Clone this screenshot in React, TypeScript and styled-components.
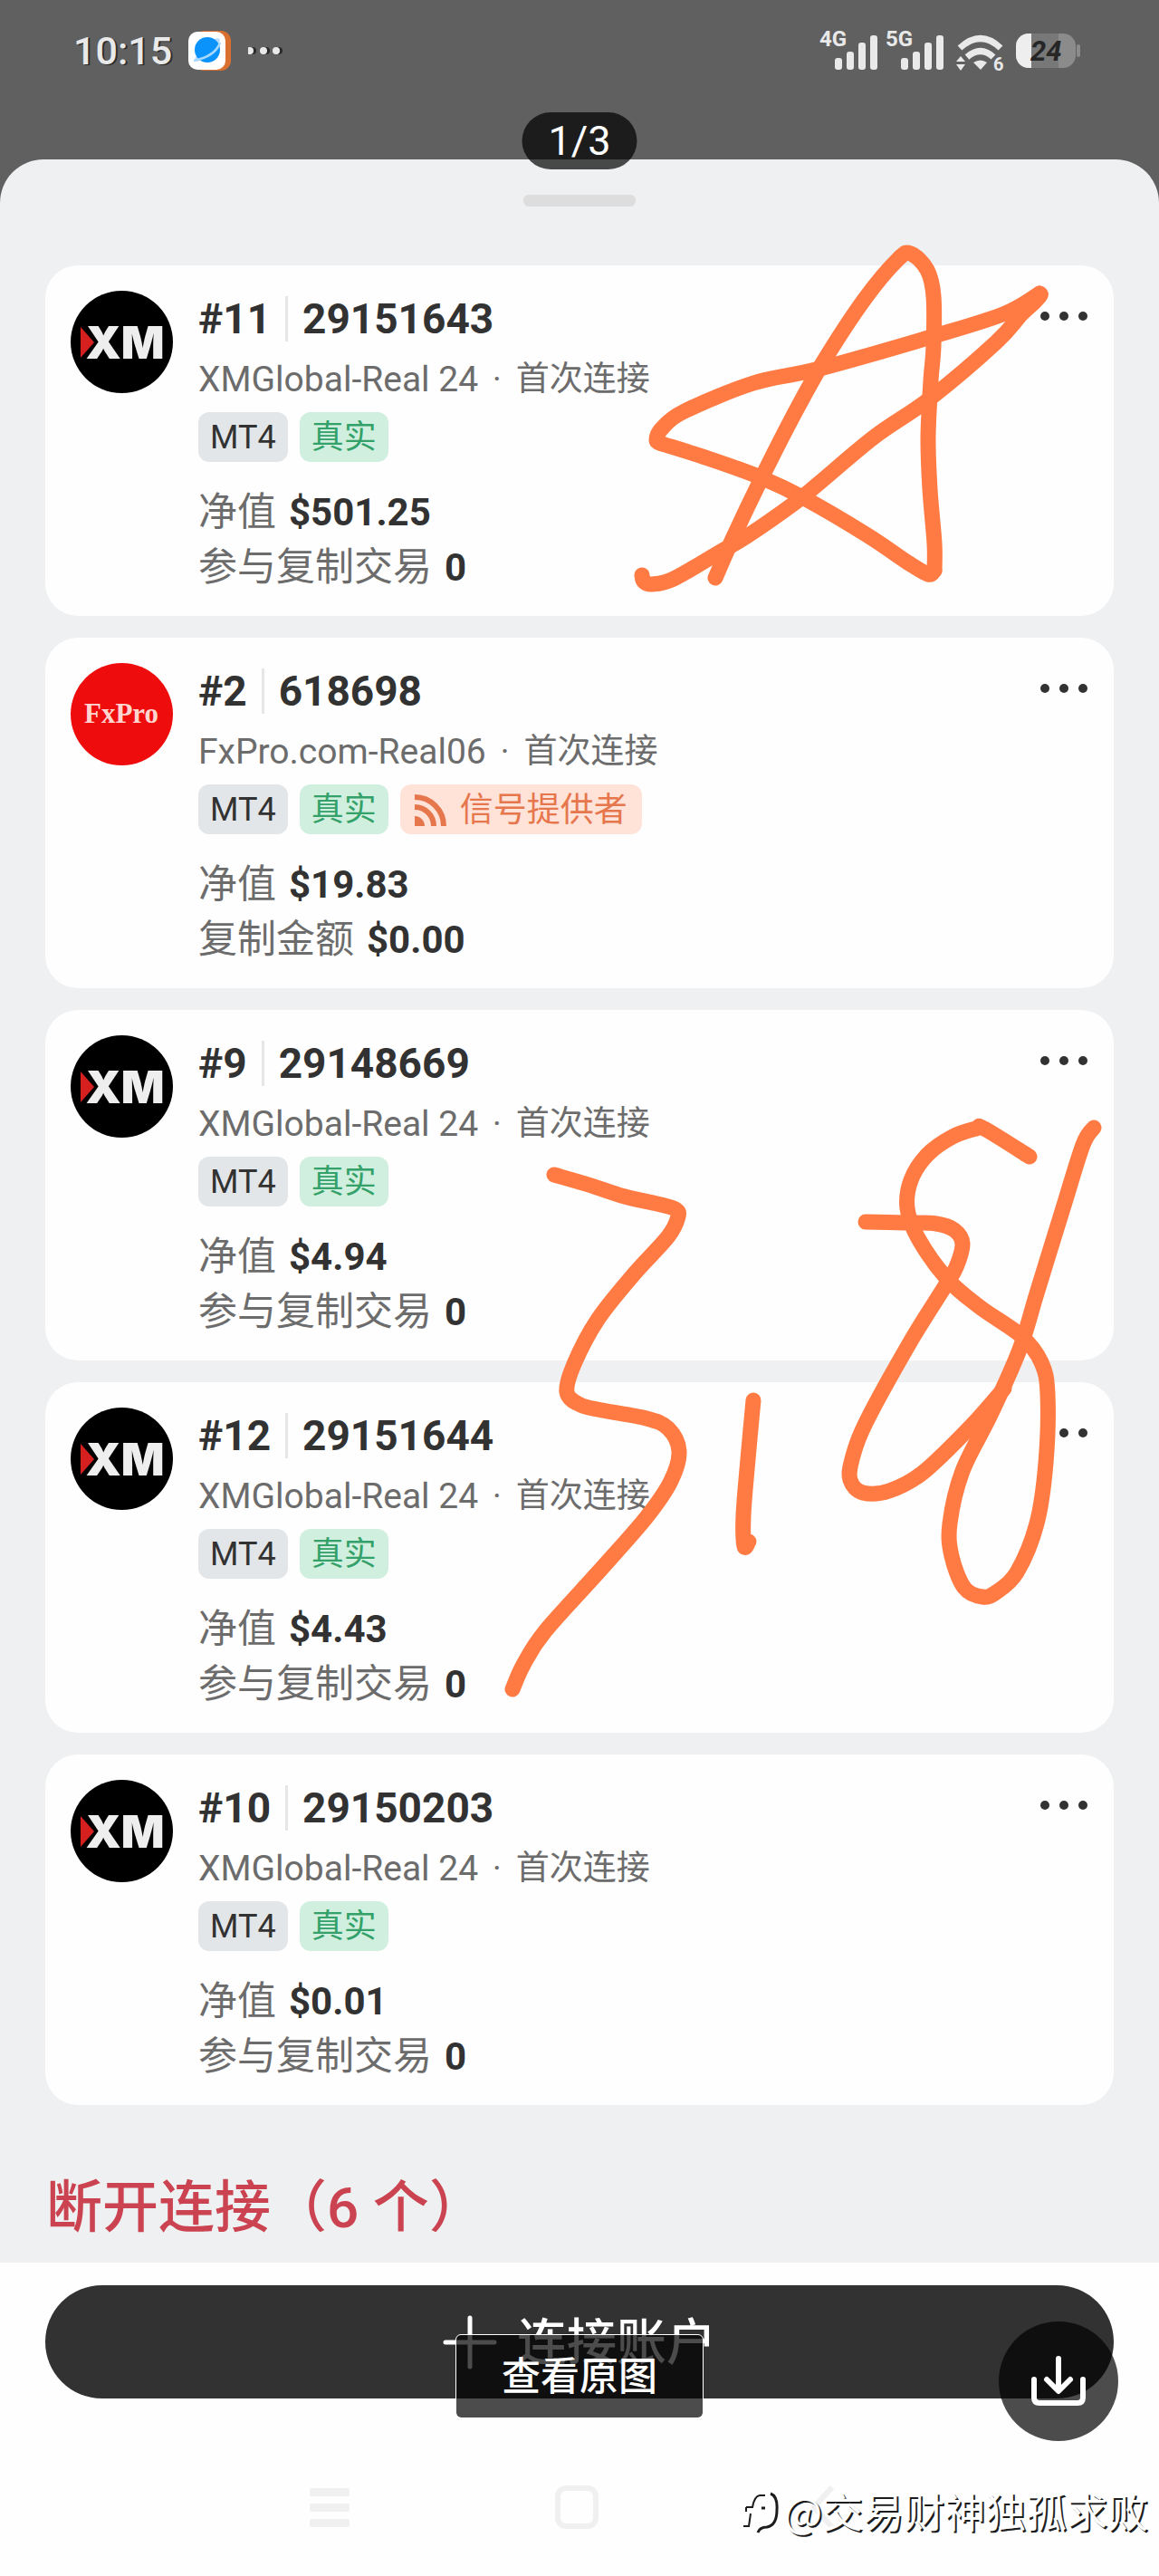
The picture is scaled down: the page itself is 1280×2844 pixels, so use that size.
import React from "react";
import styled, { createGlobalStyle } from "styled-components";

const GlobalStyle = createGlobalStyle`
  * { box-sizing: border-box; }
  body {
    margin: 0;
    background: #fefefe;
    color: #323232;
    font-family: Roboto, "Noto Sans CJK SC", sans-serif;
  }
  button {
    border: 0;
    padding: 0;
    background: none;
    color: inherit;
    font: inherit;
    cursor: pointer;
  }
  svg { display: block; }
`;

const Page = styled.div`
  position: relative;
  min-height: 100vh;
  display: flex;
  flex-direction: column;
  overflow: hidden;
  background: #606060;
`;

const StatusBar = styled.header`
  height: 176px;
  padding: 28px 87px 0 81px;
  display: flex;
  justify-content: space-between;
  align-items: flex-start;
  color: #e9e9e9;
`;

const StatusGroup = styled.div<{ $gap: number }>`
  height: 56px;
  display: flex;
  align-items: center;
  gap: ${(p) => p.$gap}px;
`;

const Clock = styled.time`
  width: 109px;
  font-size: 43px;
  line-height: 56px;
  font-weight: 500;
  white-space: nowrap;
  text-shadow: 2px 1px 0 #2b2b2b;
`;

const Sheet = styled.main`
  flex: 1;
  padding: 39px 50px 18px;
  display: flex;
  flex-direction: column;
  border-radius: 48px 48px 0 0;
  background: #eff0f2;
`;

const Handle = styled.div`
  width: 124px;
  height: 13px;
  margin: 0 auto 65px;
  border-radius: 6px;
  background: #dcdddc;
`;

const AccountList = styled.ul`
  margin: 0;
  padding: 0;
  list-style: none;
  display: flex;
  flex-direction: column;
  gap: 24px;
`;

const Card = styled.li`
  padding: 28px 29px 23px 28px;
  display: flex;
  align-items: flex-start;
  gap: 28px;
  border-radius: 36px;
  background: #fefefe;
`;

const Details = styled.div`
  flex: 1;
  min-width: 0;
`;

const Title = styled.h2`
  margin: 0;
  display: flex;
  align-items: center;
  gap: 16px;
  font-size: 46px;
  line-height: 62px;
  font-weight: 700;
`;

const Divider = styled.span`
  width: 3px;
  height: 50px;
  background: #e6e6e6;
`;

const Server = styled.p`
  margin: 11px 0;
  display: flex;
  gap: 16px;
  font-size: 37px;
  line-height: 50px;
  color: #6c6c6c;
`;

const ServerName = styled.span`
  font-size: 39px;
`;

const Chips = styled.div`
  margin-bottom: 25px;
  display: flex;
  gap: 13px;
`;

const tones = {
  gray: ["#e3e6e9", "#323232"],
  green: ["#d0efdf", "#33a169"],
  orange: ["#ffe2d8", "#e6774c"],
};

const Chip = styled.span<{ $tone: keyof typeof tones }>`
  height: 55px;
  padding: 2px ${(p) => (p.$tone === "orange" ? 16 : 13)}px 0;
  display: flex;
  align-items: center;
  gap: 15px;
  border-radius: 12px;
  font-size: ${(p) => (p.$tone === "orange" ? 37 : 36)}px;
  line-height: 53px;
  background: ${(p) => tones[p.$tone][0]};
  color: ${(p) => tones[p.$tone][1]};
`;

const Amounts = styled.dl`
  margin: 0;
`;

const Amount = styled.div`
  display: flex;
  gap: 14px;
  font-size: 43px;
  line-height: 61px;
`;

const AmountName = styled.dt`
  color: #6c6c6c;
`;

const AmountValue = styled.dd`
  margin: 0;
  font-size: 42px;
  font-weight: 700;
`;

const MoreButton = styled.button`
  height: 56px;
  display: flex;
  align-items: center;
`;

const Disconnected = styled.h2`
  margin: 74px 0 0;
  padding-left: 1px;
  font-size: 62px;
  line-height: 80px;
  font-weight: 500;
  color: #cb4350;
`;

const Footer = styled.footer`
  padding: 25px 50px 52px;
  background: #fefefe;
`;

const ConnectButton = styled.button`
  width: 100%;
  height: 125px;
  display: flex;
  align-items: center;
  justify-content: center;
  gap: 22px;
  border-radius: 63px;
  background: #323232;
  color: #fff;
  font-size: 55px;
  line-height: 72px;
  font-weight: 500;
`;

const SystemNav = styled.nav`
  height: 48px;
  margin-top: 96px;
  padding-right: 7px;
  display: grid;
  grid-template-columns: 1fr 48px 1fr;
  align-items: center;
`;

const NavButton = styled.button<{ $side?: "left" | "right" }>`
  width: 48px;
  height: 48px;
  ${(p) => p.$side === "left" && "justify-self: end; margin-right: 224px;"}
  ${(p) => p.$side === "right" && "justify-self: start; margin-left: 226px;"}
`;

const PageCounter = styled.div`
  position: absolute;
  top: 124px;
  left: 50%;
  width: 127px;
  transform: translateX(-50%);
  border-radius: 32px;
  background: rgba(0, 0, 0, 0.7);
  color: #fff;
  font-size: 45px;
  line-height: 63px;
  text-align: center;
`;

const OriginalButton = styled.button`
  && {
    position: absolute;
    bottom: 174px;
    left: 50%;
    width: 274px;
    height: 93px;
    transform: translateX(-50%);
    border: 1px solid #fff;
    border-radius: 6px;
    background: rgba(0, 0, 0, 0.7);
    background-clip: padding-box;
    color: #fff;
    font-size: 43px;
    line-height: 60px;
    font-weight: 500;
  }
`;

const DownloadButton = styled.button`
  && {
    position: absolute;
    right: 45px;
    bottom: 149px;
    width: 132px;
    height: 132px;
    border-radius: 50%;
    background: rgba(0, 0, 0, 0.7);
  }
`;

const Watermark = styled.div`
  position: absolute;
  right: 12px;
  bottom: 42px;
  display: flex;
  align-items: center;
  gap: 2px;
  color: #fff;
  font-family: "Noto Sans CJK SC", sans-serif;
  font-size: 45px;
  line-height: 60px;
  text-shadow: 2px 2px 0 #1c1c1c;
`;

const Ink = styled.svg`
  position: absolute;
  top: 0;
  left: 50%;
  transform: translateX(-50%);
  pointer-events: none;
`;

type Account = {
  order: string;
  login: string;
  broker: "XM" | "FxPro";
  server: string;
  provider?: boolean;
  equity: string;
  copyLabel: string;
  copyValue: string;
};

const xm = { broker: "XM" as const, server: "XMGlobal-Real 24", copyLabel: "参与复制交易", copyValue: "0" };

const accounts: Account[] = [
  { ...xm, order: "#11", login: "29151643", equity: "$501.25" },
  {
    order: "#2",
    login: "618698",
    broker: "FxPro",
    server: "FxPro.com-Real06",
    provider: true,
    equity: "$19.83",
    copyLabel: "复制金额",
    copyValue: "$0.00",
  },
  { ...xm, order: "#9", login: "29148669", equity: "$4.94" },
  { ...xm, order: "#12", login: "29151644", equity: "$4.43" },
  { ...xm, order: "#10", login: "29150203", equity: "$0.01" },
];

type Point = [number, number];

// Pen strokes, sampled along their centre line.
const strokes: Point[][] = [
  [[709, 635], [711, 642], [720, 645], [744, 639], [794, 610], [825, 592], [878, 555], [905, 533], [966, 482], [1027, 440], [1100, 378], [1128, 347], [1142, 334], [1149, 326], [1148, 324]],
  [[1148, 324], [1110, 346], [1035, 370], [905, 407], [832, 423], [756, 454], [731, 473], [725, 486], [731, 490]],
  [[731, 490], [782, 506], [840, 527], [890, 551], [958, 591], [1004, 622], [1025, 634], [1032, 630]],
  [[1032, 630], [1032, 600], [1027, 540], [1025, 483], [1028, 420], [1031, 383], [1031, 327], [1024, 298], [1006, 280], [992, 286], [955, 330], [909, 400], [874, 463], [840, 530], [809, 595], [790, 638]],
  [[612, 1297], [650, 1308], [690, 1321], [730, 1330], [746, 1335], [749, 1343], [738, 1365], [699, 1408], [660, 1457], [634, 1506], [626, 1537], [641, 1551], [665, 1557], [714, 1566], [738, 1577], [750, 1602], [741, 1635], [714, 1675], [665, 1731], [602, 1801], [578, 1838], [566, 1865]],
  [[832, 1546], [826, 1611], [821, 1673], [822, 1707], [827, 1702]],
  [[1137, 1277], [1087, 1246], [1078, 1246], [1052, 1255], [1024, 1275], [1006, 1303], [1002, 1334], [1014, 1367], [1046, 1412], [1082, 1443], [1128, 1475], [1150, 1504], [1157, 1539], [1155, 1615], [1145, 1682], [1123, 1736], [1100, 1758], [1085, 1763], [1065, 1753], [1051, 1718], [1049, 1682], [1063, 1624], [1094, 1562], [1126, 1490], [1145, 1428], [1174, 1334], [1196, 1264], [1208, 1245]],
  [[956, 1349], [1000, 1350], [1034, 1351], [1054, 1358], [1063, 1373], [1056, 1399], [1043, 1421], [1005, 1482], [956, 1571], [941, 1611], [939, 1634], [953, 1648], [982, 1646], [1019, 1626], [1072, 1575], [1109, 1533]],
];

// Catmull-Rom spline through the sampled points, as cubic Béziers.
function smooth(points: Point[]): string {
  const at = (i: number) => points[Math.max(0, Math.min(points.length - 1, i))];
  let d = `M${points[0].join(" ")}`;
  for (let i = 0; i < points.length - 1; i++) {
    const [a, b, c, e] = [at(i - 1), at(i), at(i + 1), at(i + 2)];
    d += `C${b[0] + (c[0] - a[0]) / 6} ${b[1] + (c[1] - a[1]) / 6} ${c[0] - (e[0] - b[0]) / 6} ${c[1] - (e[1] - b[1]) / 6} ${c[0]} ${c[1]}`;
  }
  return d;
}

const BrokerLogo = ({ broker }: { broker: Account["broker"] }) =>
  broker === "XM" ? (
    <svg width="113" height="113" viewBox="0 0 113 113" role="img" aria-label="XM">
      <circle cx="56.5" cy="56.5" r="56.5" fill="#000" />
      <text x="60" y="75" textAnchor="middle" fontFamily="Inter, sans-serif" fontWeight="900" fontSize="50" fill="#eee">XM</text>
      <path d="M11 40V74L26 57Z" fill="#d5201f" />
    </svg>
  ) : (
    <svg width="113" height="113" viewBox="0 0 113 113" role="img" aria-label="FxPro">
      <circle cx="56.5" cy="56.5" r="56.5" fill="#ee0c0c" />
      <text x="56" y="66" textAnchor="middle" fontFamily="Liberation Serif, serif" fontWeight="700" fontSize="31" fill="#ffd5d0">FxPro</text>
    </svg>
  );

const SignalIcon = () => (
  <svg width="35" height="35" viewBox="0 0 35 35" fill="none" stroke="currentColor" strokeWidth="6">
    <path d="M0 24A11 11 0 0 1 11 35H0Z" fill="currentColor" stroke="none" />
    <path d="M0 14A21 21 0 0 1 21 35M0 3A32 32 0 0 1 32 35" />
  </svg>
);

const AppIcon = () => (
  <svg width="48" height="46" viewBox="0 0 48 46">
    <rect x="6" y="1" width="41" height="44" rx="11" fill="#d9702f" />
    <rect x="0" y="2" width="41" height="42" rx="10" fill="#fff" />
    <ellipse cx="21" cy="22" rx="18" ry="5" transform="rotate(-42 21 22)" fill="#b9dcff" />
    <circle cx="21" cy="22" r="14" fill="#0a93fb" />
    <path d="M6 34Q30 29 35 14" fill="none" stroke="#a7d9ff" strokeWidth="2.5" />
  </svg>
);

const StatusDots = () => (
  <svg width="42" height="12" viewBox="3 0 42 12">
    {[5, 20, 34].map((x) => (
      <g key={x}>
        <circle cx={x + 3} cy="6" r="4" fill="#2b2b2b" />
        <circle cx={x} cy="6" r="4" fill="#e9e9e9" />
      </g>
    ))}
  </svg>
);

const CellSignal = ({ label }: { label: string }) => (
  <svg width="65" height="62" viewBox="0 -8 65 62" fill="#e9e9e9">
    <text x="0" y="18" fontFamily="Roboto, sans-serif" fontWeight="700" fontSize="24">{label}</text>
    <rect x="17" y="31" width="8" height="13" rx="3" />
    <rect x="30" y="24" width="8" height="20" rx="3" />
    <rect x="43" y="14" width="8" height="30" rx="3" />
    <rect x="56" y="6" width="8" height="38" rx="3" />
  </svg>
);

const WifiIcon = () => (
  <svg width="53" height="58" viewBox="0 -6 53 58" fill="#e9e9e9">
    <path d="M4 20Q27 -1 49 20" fill="none" stroke="#e9e9e9" strokeWidth="7" />
    <path d="M12 30Q27 17 41 30" fill="none" stroke="#e9e9e9" strokeWidth="7" />
    <path d="M19 36Q27 31 34 36L27 44Z" />
    <path d="M0 35L5 29L10 35ZM0 38H10L5 45Z" />
    <text x="41" y="45" fontFamily="Roboto, sans-serif" fontWeight="700" fontSize="20">6</text>
  </svg>
);

const BatteryIcon = () => (
  <svg width="71" height="38" viewBox="0 0 71 38">
    <rect width="66" height="38" rx="14" fill="#8b8b8b" />
    <path d="M17 0H47V38H17Z" fill="#787878" />
    <path d="M14 0H17V38H14A14 14 0 0 1 0 24V14A14 14 0 0 1 14 0Z" fill="#eee" />
    <rect x="67" y="12" width="4" height="14" rx="2" fill="#8b8b8b" />
    <text x="16" y="30" fontFamily="Roboto, sans-serif" fontWeight="700" fontStyle="italic" fontSize="31" fill="#262626">24</text>
  </svg>
);

const MoreIcon = () => (
  <svg width="52" height="12" viewBox="0 0 52 12" fill="#323232">
    <circle cx="5" cy="6" r="5" />
    <circle cx="26" cy="6" r="5" />
    <circle cx="47" cy="6" r="5" />
  </svg>
);

const PlusIcon = () => (
  <svg width="60" height="60" viewBox="0 0 60 60" stroke="#fff" strokeWidth="5" strokeLinecap="round">
    <path d="M30 3V57M3 30H57" />
  </svg>
);

const DownloadIcon = () => (
  <svg width="132" height="132" viewBox="0 0 132 132" fill="none" stroke="#fff" strokeWidth="6" strokeLinecap="round" strokeLinejoin="round">
    <path d="M66 41V76M53 64L66 77L79 64" />
    <path d="M39 64V84Q39 90 45 90H87Q93 90 93 84V64" />
  </svg>
);

// White speech-bubble mark, drawn by the shadow on its lower and right edges.
const WatermarkLogo = () => (
  <svg width="46" height="52" viewBox="0 0 46 52" fill="none" stroke="#1c1c1c" strokeWidth="2">
    <path d="M7 22H14Q16 10 22 9H28" />
    <path d="M7 22V27M12 29L10 43H4" />
    <path d="M24 23H28" strokeWidth="3" />
    <path d="M34 7Q42 10 41 25Q41 42 30 44Q22 44 20 50" strokeWidth="3" />
  </svg>
);

const AccountCard = ({ account }: { account: Account }) => (
  <Card>
    <BrokerLogo broker={account.broker} />
    <Details>
      <Title>
        <span>{account.order}</span>
        <Divider />
        <span>{account.login}</span>
      </Title>
      <Server>
        <ServerName>{account.server}</ServerName>
        <span>·</span>
        <span>首次连接</span>
      </Server>
      <Chips>
        <Chip $tone="gray">MT4</Chip>
        <Chip $tone="green">真实</Chip>
        {account.provider && (
          <Chip $tone="orange">
            <SignalIcon />
            信号提供者
          </Chip>
        )}
      </Chips>
      <Amounts>
        <Amount>
          <AmountName>净值</AmountName>
          <AmountValue>{account.equity}</AmountValue>
        </Amount>
        <Amount>
          <AmountName>{account.copyLabel}</AmountName>
          <AmountValue>{account.copyValue}</AmountValue>
        </Amount>
      </Amounts>
    </Details>
    <MoreButton type="button" aria-label={`更多 ${account.order}`}>
      <MoreIcon />
    </MoreButton>
  </Card>
);

export default function App() {
  return (
    <Page>
      <GlobalStyle />
      <StatusBar>
        <StatusGroup $gap={18}>
          <Clock>10:15</Clock>
          <AppIcon />
          <StatusDots />
        </StatusGroup>
        <StatusGroup $gap={13}>
          <StatusGroup $gap={8}>
            <CellSignal label="4G" />
            <CellSignal label="5G" />
          </StatusGroup>
          <WifiIcon />
          <BatteryIcon />
        </StatusGroup>
      </StatusBar>

      <Sheet>
        <Handle />
        <AccountList>
          {accounts.map((account) => (
            <AccountCard key={account.order} account={account} />
          ))}
        </AccountList>
        <Disconnected>断开连接（6 个）</Disconnected>
      </Sheet>

      <Footer>
        <ConnectButton type="button">
          <PlusIcon />
          连接账户
        </ConnectButton>
        <SystemNav>
          <NavButton type="button" aria-label="最近任务" $side="left">
            <svg width="48" height="48" viewBox="0 0 48 48" fill="#f0f0f0">
              <rect x="1" y="3" width="44" height="9" rx="2" />
              <rect x="1" y="20" width="44" height="9" rx="2" />
              <rect x="1" y="37" width="44" height="9" rx="2" />
            </svg>
          </NavButton>
          <NavButton type="button" aria-label="主页">
            <svg width="48" height="48" viewBox="0 0 48 48" fill="none" stroke="#f0f0f0" strokeWidth="6">
              <rect x="3" y="3" width="42" height="42" rx="9" />
            </svg>
          </NavButton>
          <NavButton type="button" aria-label="返回" $side="right">
            <svg width="48" height="48" viewBox="0 0 48 48" fill="none" stroke="#f0f0f0" strokeWidth="6">
              <path d="M32 2L12 24L32 46" />
            </svg>
          </NavButton>
        </SystemNav>
      </Footer>

      <Ink width="1280" height="1900" viewBox="0 0 1280 1900" fill="none" stroke="#ff7b43" strokeWidth="17" strokeLinecap="round" strokeLinejoin="round">
        {strokes.map((points, i) => (
          <path key={i} d={smooth(points)} />
        ))}
      </Ink>
      <PageCounter>1/3</PageCounter>
      <OriginalButton type="button">查看原图</OriginalButton>
      <DownloadButton type="button" aria-label="下载">
        <DownloadIcon />
      </DownloadButton>
      <Watermark>
        <WatermarkLogo />
        @交易财神独孤求败
      </Watermark>
    </Page>
  );
}
